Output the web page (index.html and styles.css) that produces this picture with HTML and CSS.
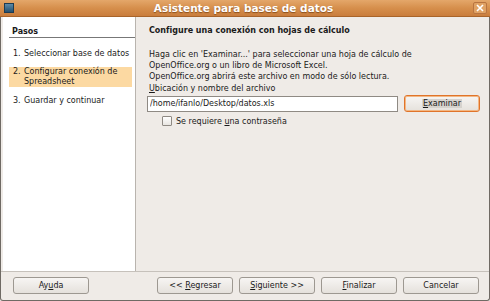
FILE: index.html
```html
<!DOCTYPE html>
<html lang="es">
<head>
<meta charset="UTF-8">
<title>Asistente para bases de datos</title>
<link rel="stylesheet" href="styles.css">
</head>
<body>

<div class="window">
    <div class="titlebar">
        <span class="app-icon"></span>
        <span class="title">Asistente para bases de datos</span>
        <span class="close">
            <svg width="8" height="8" viewBox="0 0 8 8"><path d="M1 1 L7 7 M7 1 L1 7" stroke="#fff" stroke-width="1.6"/></svg>
        </span>
    </div>

    <div class="main">
        <div class="steps">
            <div class="steps-title">Pasos</div>
            <div class="step"><span class="num">1.</span><span>Seleccionar base de datos</span></div>
            <div class="step active"><span class="num">2.</span><span>Configurar conexión de<br>Spreadsheet</span></div>
            <div class="step"><span class="num">3.</span><span>Guardar y continuar</span></div>
        </div>

        <div class="content">
            <h2>Configure una conexión con hojas de cálculo</h2>
            <p class="info">Haga clic en 'Examinar...' para seleccionar una hoja de cálculo de<br>OpenOffice.org o un libro de Microsoft Excel.<br>OpenOffice.org abrirá este archivo en modo de sólo lectura.</p>
            <div class="label"><u>U</u>bicación y nombre del archivo</div>
            <div class="file-row">
                <input type="text" class="path" value="/home/ifanlo/Desktop/datos.xls">
                <div class="btn focus"><span class="sel"><u>E</u>xaminar</span></div>
            </div>
            <div class="check-row">
                <span class="checkbox"></span>
                <span>Se requiere <u>u</u>na contraseña</span>
            </div>
        </div>
    </div>

    <div class="footer">
        <div class="btn"><span>Ay<u>u</u>da</span></div>
        <div class="nav">
            <div class="btn"><span>&lt;&lt; <u>R</u>egresar</span></div>
            <div class="btn"><span><u>S</u>iguiente &gt;&gt;</span></div>
            <div class="btn"><span><u>F</u>inalizar</span></div>
            <div class="btn"><span>Cancelar</span></div>
        </div>
    </div>
</div>

</body>
</html>
```

FILE: styles.css
```css
body {
    margin: 0;
    padding: 0;
    font-family: "DejaVu Sans", sans-serif;
    font-size: 8px;
    color: #1a1a1a;
    background: #efebe7;
}

.window {
    width: 490px;
    height: 301px;
    box-sizing: border-box;
    display: flex;
    flex-direction: column;
    background: #efebe7;
    border: 1px solid #6f6a64;
    border-top: none;
    border-radius: 0 0 3px 3px;
}

.titlebar {
    height: 16px;
    flex: none;
    display: flex;
    align-items: center;
    padding: 0 3px 0 4px;
    background: linear-gradient(#e4a76a, #d68f4c 50%, #c97d3d);
    border-bottom: 1px solid #a8642a;
    margin: 0 -1px;
}

.app-icon {
    width: 10px;
    height: 10px;
    background: linear-gradient(#5d8aa8, #24506e);
    border: 1px solid #1d3b52;
    box-sizing: border-box;
}

.title {
    flex: 1;
    text-align: center;
    color: #fff;
    font-size: 10.5px;
    font-weight: bold;
    text-shadow: 0 1px 1px #8a4f1c;
}

.close {
    width: 14px;
    height: 12px;
    display: flex;
    align-items: center;
    justify-content: center;
    border: 1px solid #b87440;
    border-radius: 2px;
    box-sizing: border-box;
    background: #e0a264;
}

.main {
    flex: 1;
    display: flex;
    border-bottom: 1px solid #c6c1bb;
}

.steps {
    width: 133px;
    margin-left: 2px;
    background: #fff;
    border-right: 1px solid #b9b4ae;
    padding: 10px 0 0 6px;
    box-sizing: border-box;
}

.steps-title {
    font-weight: bold;
    border-bottom: 1px solid #777;
    padding: 0 0 1px 3px;
    margin-bottom: 11px;
}

.step {
    display: flex;
    padding: 0 2px 0 4px;
    margin-bottom: 9px;
    line-height: 10px;
}

.num {
    width: 11px;
    flex: none;
}

.step.active {
    background: #fcd9a2;
    margin-right: 3px;
    margin-top: -1px;
    padding-top: 0;
    padding-bottom: 0;
}

.content {
    flex: 1;
    padding: 9px 0 0 11px;
}

h2 {
    font-size: 8px;
    font-weight: bold;
    margin: 0 0 14px 2px;
}

.info {
    margin: 0 0 1px 2px;
    line-height: 11px;
}

.label {
    margin-left: 2px;
    line-height: 11px;
}

.file-row {
    display: flex;
    align-items: center;
    margin-top: 1px;
}

.path {
    width: 251px;
    height: 16px;
    box-sizing: border-box;
    border: 1px solid #8f8a84;
    padding: 0 2px;
    font-family: "DejaVu Sans", sans-serif;
    font-size: 8px;
    color: #1a1a1a;
    outline: none;
}

.btn {
    width: 76px;
    height: 17px;
    box-sizing: border-box;
    display: flex;
    align-items: center;
    justify-content: center;
    border: 1px solid #9d9891;
    border-radius: 3px;
    background: linear-gradient(#f7f5f3, #e5e1dc);
    white-space: pre;
}

.btn.focus {
    margin-left: 6px;
    border: 1px solid #e0742a;
    box-shadow: 0 0 0 1px #f3b784 inset;
}

.sel {
    background: #d6d2cd;
    padding: 0 1px;
}

.check-row {
    display: flex;
    align-items: center;
    gap: 4px;
    margin: 4px 0 0 15px;
}

.checkbox {
    width: 8px;
    height: 8px;
    border: 1px solid #8f8a84;
    border-radius: 1px;
    background: linear-gradient(#fff, #e8e5e1);
}

.footer {
    height: 28px;
    flex: none;
    display: flex;
    align-items: flex-start;
    justify-content: space-between;
    padding: 5px 10px 0 12px;
    box-sizing: border-box;
}

.nav {
    display: flex;
    gap: 6px;
}
```
